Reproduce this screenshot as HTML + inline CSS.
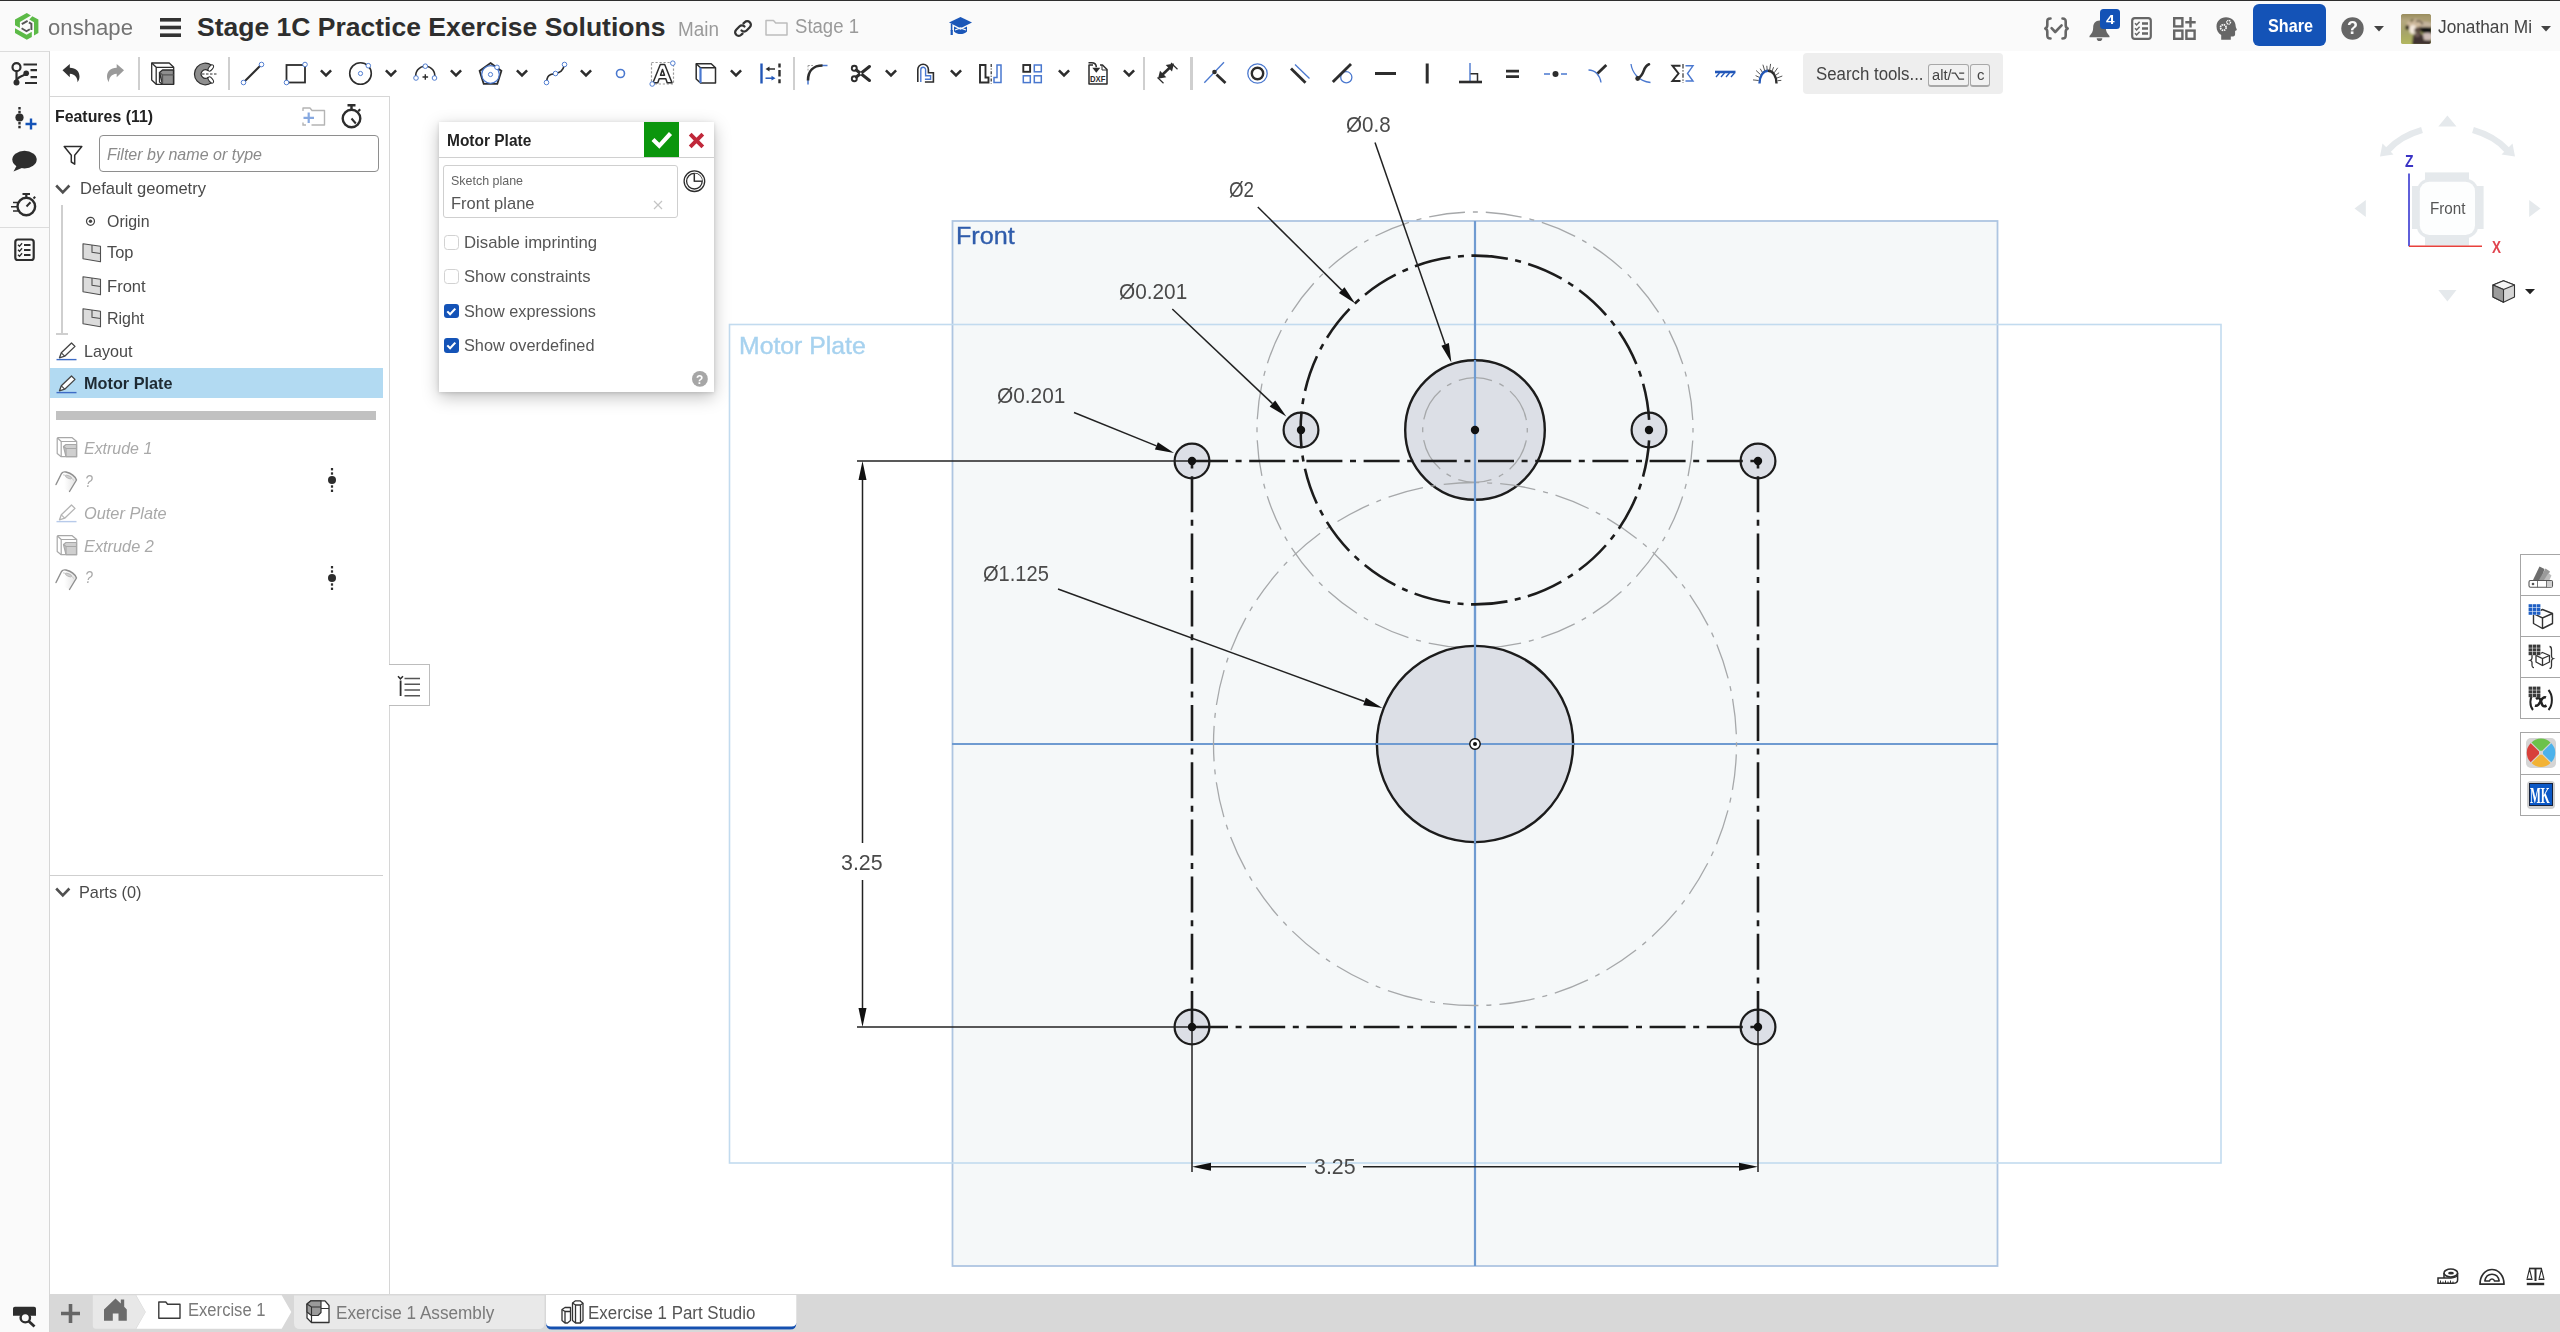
<!DOCTYPE html><html lang="en"><head><meta charset="utf-8"><title>Stage 1C Practice Exercise Solutions | Onshape</title><style>
*{box-sizing:border-box;margin:0;padding:0}
html,body{width:2560px;height:1332px;overflow:hidden;background:#fff}
body{font-family:"Liberation Sans",sans-serif;position:relative}
.abs{position:absolute}
.t{position:absolute;white-space:pre;line-height:1;transform-origin:0 50%;display:block}
svg{display:block;overflow:visible}
.ic{position:absolute;overflow:visible}
</style></head><body>
<svg class="abs" style="left:0;top:0" width="2560" height="1332" viewBox="0 0 2560 1332">
<rect x="952.5" y="221" width="1045" height="1045" fill="#f5f8f9" stroke="#aec5e1" stroke-width="1.800"/>
<rect x="729.5" y="324.5" width="1491.5" height="838.5" fill="none" stroke="#c2dbef" stroke-width="1.600"/>
<g stroke="#6f9bd1" stroke-width="2.2"><line x1="1475" y1="221" x2="1475" y2="1266"/><line x1="952" y1="744" x2="1998" y2="744"/></g>
<path d="M1693.00 430.00A218.00 218.00 0 1 1 1257.00 430.00A218.00 218.00 0 1 1 1693.00 430.00" fill="none" stroke="#a6a8aa" stroke-width="1.3" stroke-dasharray="36.07 8 5 8" stroke-dashoffset="46.57"/>
<circle cx="1475" cy="430" r="69.8" fill="#dcdfe6" stroke="#1c1c1c" stroke-width="2.400"/>
<circle cx="1475" cy="744" r="98.1" fill="#dcdfe6" stroke="#1c1c1c" stroke-width="2.400"/>
<path d="M1527.30 430.00A52.30 52.30 0 1 1 1422.70 430.00A52.30 52.30 0 1 1 1527.30 430.00" fill="none" stroke="#a6a8aa" stroke-width="1.3" stroke-dasharray="33.77 8 5 8" stroke-dashoffset="44.27"/>
<path d="M1736.50 744.00A261.50 261.50 0 1 1 1213.50 744.00A261.50 261.50 0 1 1 1736.50 744.00" fill="none" stroke="#a6a8aa" stroke-width="1.3" stroke-dasharray="35.66 8 5 8" stroke-dashoffset="46.16"/>
<circle cx="1301" cy="430" r="17.400" fill="#dcdfe6" stroke="#1c1c1c" stroke-width="2.200"/>
<circle cx="1649" cy="430" r="17.400" fill="#dcdfe6" stroke="#1c1c1c" stroke-width="2.200"/>
<circle cx="1192" cy="461" r="17.400" fill="#dcdfe6" stroke="#1c1c1c" stroke-width="2.200"/>
<circle cx="1758" cy="461" r="17.400" fill="#dcdfe6" stroke="#1c1c1c" stroke-width="2.200"/>
<circle cx="1192" cy="1027" r="17.400" fill="#dcdfe6" stroke="#1c1c1c" stroke-width="2.200"/>
<circle cx="1758" cy="1027" r="17.400" fill="#dcdfe6" stroke="#1c1c1c" stroke-width="2.200"/>
<g stroke="#6f9bd1" stroke-width="2.2"><line x1="1475" y1="360" x2="1475" y2="843"/><line x1="1376" y1="744" x2="1574" y2="744"/></g>
<g stroke="#1c1c1c" stroke-width="2.600" stroke-dasharray="36 7.6 6 7.6" fill="none">
<path d="M1192 461H1758"/><path d="M1192 1027H1758"/><path d="M1192 1027V461"/><path d="M1758 1027V461"/>
</g>
<path d="M1649.40 430.00A174.40 174.40 0 1 1 1300.60 430.00A174.40 174.40 0 1 1 1649.40 430.00" fill="none" stroke="#1c1c1c" stroke-width="2.6" stroke-dasharray="36.67 7.5 6 7.5" stroke-dashoffset="47.17"/>
<circle cx="1301" cy="430" r="4.2" fill="#111"/>
<circle cx="1649" cy="430" r="4.2" fill="#111"/>
<circle cx="1192" cy="461" r="4.2" fill="#111"/>
<circle cx="1758" cy="461" r="4.2" fill="#111"/>
<circle cx="1192" cy="1027" r="4.2" fill="#111"/>
<circle cx="1758" cy="1027" r="4.2" fill="#111"/>
<circle cx="1475" cy="430" r="4.2" fill="#111"/>
<circle cx="1475" cy="744" r="5.2" fill="#fff" stroke="#111" stroke-width="1.4"/><circle cx="1475" cy="744" r="2" fill="#111"/>
<line x1="1375.0" y1="142.6" x2="1445.2" y2="344.5" stroke="#222" stroke-width="1.5"/><polygon points="1451.4,362.4 1441.4,345.8 1448.9,343.1" fill="#111"/>
<line x1="1257.8" y1="207.0" x2="1341.7" y2="290.1" stroke="#222" stroke-width="1.5"/><polygon points="1355.2,303.5 1338.9,293.0 1344.5,287.3" fill="#111"/>
<line x1="1172.3" y1="309.0" x2="1272.5" y2="403.6" stroke="#222" stroke-width="1.5"/><polygon points="1286.3,416.6 1269.7,406.5 1275.2,400.6" fill="#111"/>
<line x1="1074.0" y1="412.5" x2="1156.4" y2="445.9" stroke="#222" stroke-width="1.5"/><polygon points="1174.0,453.0 1154.9,449.6 1157.9,442.2" fill="#111"/>
<line x1="1058.0" y1="589.0" x2="1364.6" y2="701.5" stroke="#222" stroke-width="1.5"/><polygon points="1382.4,708.0 1363.2,705.2 1365.9,697.7" fill="#111"/>
<g stroke="#222" stroke-width="1.5"><line x1="857" y1="461" x2="1188" y2="461"/><line x1="857" y1="1027" x2="1188" y2="1027"/></g>
<line x1="862.5" y1="843.0" x2="862.5" y2="480.0" stroke="#222" stroke-width="1.5"/><polygon points="862.5,461.0 866.5,480.0 858.5,480.0" fill="#111"/>
<line x1="862.5" y1="880.0" x2="862.5" y2="1008.0" stroke="#222" stroke-width="1.5"/><polygon points="862.5,1027.0 858.5,1008.0 866.5,1008.0" fill="#111"/>
<g stroke="#222" stroke-width="1.5"><line x1="1192" y1="1031" x2="1192" y2="1172"/><line x1="1758" y1="1031" x2="1758" y2="1172"/></g>
<line x1="1306.0" y1="1166.8" x2="1211.0" y2="1166.8" stroke="#222" stroke-width="1.5"/><polygon points="1192.0,1166.8 1211.0,1162.8 1211.0,1170.8" fill="#111"/>
<line x1="1363.0" y1="1166.8" x2="1739.0" y2="1166.8" stroke="#222" stroke-width="1.5"/><polygon points="1758.0,1166.8 1739.0,1170.8 1739.0,1162.8" fill="#111"/>
</svg>
<span class="t" style="left:955.5px;top:224px;font-size:24px;color:#2f5cab;transform:scaleX(1.0479);-webkit-text-stroke:0.350px #2f5cab;">Front</span>
<span class="t" style="left:739.0px;top:335px;font-size:23.5px;color:#a7d2ef;transform:scaleX(1.0544);-webkit-text-stroke:0.400px #a7d2ef;">Motor Plate</span>
<span class="t" style="left:1346.2px;top:114px;font-size:22px;color:#4a4a4a;transform:scaleX(0.9351);">Ø0.8</span>
<span class="t" style="left:1228.5px;top:179px;font-size:22px;color:#4a4a4a;transform:scaleX(0.8519);">Ø2</span>
<span class="t" style="left:1118.5px;top:281px;font-size:22px;color:#4a4a4a;transform:scaleX(0.9450);">Ø0.201</span>
<span class="t" style="left:997.0px;top:385px;font-size:22px;color:#4a4a4a;transform:scaleX(0.9478);">Ø0.201</span>
<span class="t" style="left:983.4px;top:563px;font-size:22px;color:#4a4a4a;transform:scaleX(0.9118);">Ø1.125</span>
<span class="t" style="left:841.4px;top:852px;font-size:22px;color:#4a4a4a;transform:scaleX(0.9715);">3.25</span>
<span class="t" style="left:1314.0px;top:1156px;font-size:22px;color:#4a4a4a;transform:scaleX(0.9715);">3.25</span>
<div class="abs" style="left:0;top:0;width:2560px;height:51px;background:#fafafa"></div>
<div class="abs" style="left:0;top:0;width:2560px;height:1px;background:#2e2e2e"></div>
<div class="abs" style="left:50px;top:51px;width:2510px;height:46px;background:#fff"></div>
<div class="abs" style="left:0;top:51px;width:50px;height:1281px;background:#fafafa;border-top:1px solid #dcdcdc;border-right:1px solid #d4d4d4"></div>
<div class="abs" style="left:0;top:227px;width:49px;height:1px;background:#dcdcdc"></div>
<div class="abs" style="left:49px;top:96px;width:341px;height:1199px;background:#fff;border:1px solid #d6d6d6"></div>
<div class="abs" style="left:50px;top:1294px;width:2510px;height:38px;background:#d8d8d8"></div>
<svg class="ic" style="left:10px;top:8px" width="40" height="38" viewBox="10 8 40 38"><g fill="#5cba47"><polygon points="26.800,13.100 30.900,15.500 19.900,21.900 19.900,28.100 15,25.300 15,19.400"/><polygon points="32.300,16.300 38.400,19.400 38.400,32.900 34,35.500 34,22.300 29.300,19.500"/><polygon points="15,28.200 26.600,34.800 31.800,31.800 31.800,36.900 26.800,39.800 15,32.900"/></g><g fill="none" stroke="#565656" stroke-width="1.900" stroke-linejoin="miter"><path d="M27.600 20.800L21.800 24.100"/><path d="M28.900 22.400L31.400 23.900V30"/><path d="M21.600 28.300L26.500 31.200L29.800 29.300"/></g></svg>
<span class="t" style="left:48.0px;top:17px;font-size:22.5px;color:#737373;transform:scaleX(0.9846);">onshape</span>
<svg class="ic" style="left:160px;top:18px" width="21" height="19" viewBox="0 0 21 19" ><rect x="0" y="0" width="21" height="3.6" fill="#333"/><rect x="0" y="7.7" width="21" height="3.6" fill="#333"/><rect x="0" y="15.4" width="21" height="3.6" fill="#333"/></svg>
<span class="t" style="left:197.0px;top:14px;font-size:26.5px;color:#2e2e2e;font-weight:bold;">Stage 1C Practice Exercise Solutions</span>
<span class="t" style="left:677.6px;top:20px;font-size:19.5px;color:#9a9a9a;transform:scaleX(0.9701);">Main</span>
<svg class="ic" style="left:733px;top:19px" width="20" height="19" viewBox="0 0 20 19" ><g fill="none" stroke="#333" stroke-width="2.3" stroke-linecap="round"><path d="M8.5 11.5a3.6 3.6 0 0 0 5.1 0l3.2-3.2a3.6 3.6 0 0 0-5.1-5.1l-1.2 1.2"/><path d="M11.5 7.5a3.6 3.6 0 0 0-5.1 0l-3.2 3.2a3.6 3.6 0 0 0 5.1 5.1l1.2-1.2"/></g></svg>
<svg class="ic" style="left:765px;top:19px" width="23" height="17" viewBox="0 0 23 17" ><path d="M1 1.5h7.5l2.2 2.6H22v12H1z" fill="none" stroke="#bdbdbd" stroke-width="1.5" stroke-linejoin="round"/></svg>
<span class="t" style="left:795.0px;top:17px;font-size:19.5px;color:#9a9a9a;transform:scaleX(0.9521);">Stage 1</span>
<svg class="ic" style="left:949px;top:17px" width="23" height="19" viewBox="0 0 23 19" ><polygon points="11.5,0 23,5.6 11.5,11.2 0,5.6" fill="#1a56b8"/><path d="M5 9.5v5c2 2 4.2 2.6 6.5 2.6s4.5-.6 6.5-2.6v-5l-6.5 3.2z" fill="#1a56b8"/><path d="M2.6 6.8v7.2" stroke="#1a56b8" stroke-width="1.6"/><rect x="1.6" y="13" width="2.2" height="5" fill="#1a56b8"/><path d="M6 13l5.5-2 5.5 2" stroke="#fafafa" stroke-width="1.2" fill="none"/></svg>
<svg class="ic" style="left:2044px;top:17px" width="25" height="23" viewBox="0 0 25 23" ><g fill="none" stroke="#666" stroke-width="2.6" stroke-linecap="round" stroke-linejoin="round"><path d="M6.5 1.5c-3 0-3.2 1.2-3.2 3.2v3.6c0 1.6-.6 2.6-2 3.2c1.4.6 2 1.6 2 3.2v3.6c0 2 .2 3.2 3.2 3.2"/><path d="M18.5 1.5c3 0 3.2 1.2 3.2 3.2v3.6c0 1.6.6 2.6 2 3.2c-1.4.6-2 1.6-2 3.2v3.6c0 2-.2 3.2-3.2 3.2"/><path d="M7.6 11.2l3.6 3.8l6.4-6.6"/></g></svg>
<svg class="ic" style="left:2089px;top:20px" width="21" height="20" viewBox="0 0 21 20" ><path d="M10.5 0.5c-4 0-6.3 3-6.3 6.8c0 4.2-1.3 6.2-3.7 8.6v1.3h20v-1.3c-2.4-2.4-3.7-4.4-3.7-8.6c0-3.8-2.300-6.800-6.300-6.800z" fill="#666"/><path d="M7.700 18.2a2.800 2.800 0 0 0 5.600 0z" fill="#666"/></svg>
<div class="abs" style="left:2100px;top:9px;width:20px;height:20px;background:#1352b6;border-radius:3.500px"></div>
<span class="t" style="left:2106.0px;top:13px;font-size:13.5px;color:#fff;font-weight:bold;transform:scaleX(1.1322);">4</span>
<svg class="ic" style="left:2131px;top:17px" width="21" height="23" viewBox="0 0 21 23" ><rect x="1.2" y="1.2" width="18.6" height="20.6" rx="2.6" fill="none" stroke="#666" stroke-width="2.2"/><g stroke="#666" stroke-width="2.400"><path d="M11 6.500h6M11 11.500h6M11 16.500h6"/></g><g fill="none" stroke="#666" stroke-width="1.500"><path d="M4 6.300l1.600 1.600l3-3.200M4 11.300l1.600 1.600l3-3.200M4 16.300l1.600 1.600l3-3.200"/></g></svg>
<svg class="ic" style="left:2173px;top:17px" width="23" height="23" viewBox="0 0 23 23" ><g fill="none" stroke="#666" stroke-width="2.400"><rect x="1.2" y="1.200" width="8.200" height="8.200"/><rect x="1.2" y="13.600" width="8.200" height="8.200"/><rect x="13.400" y="13.600" width="8.200" height="8.200"/><path d="M17.500 0v10.400M12.300 5.200h10.400"/></g></svg>
<svg class="ic" style="left:2216px;top:17px" width="21" height="23" viewBox="0 0 21 23" ><path d="M10 0.300c5.600 0 9.600 3.700 9.600 8.500c0 1.200.3 2 1 3.200c.4.700.2 1.200-.6 1.500l-.900.400v3.400c0 1.400-.800 2.100-2.100 2.100h-2.200v3.300H5.200v-4.600c-3-1.900-4.700-4.900-4.700-8.600c0-5.200 4-9.200 9.500-9.200z" fill="#666"/><circle cx="7.300" cy="10.500" r="2.800" fill="none" stroke="#fafafa" stroke-width="1.700" stroke-dasharray="1.500 0.700"/><circle cx="12.600" cy="5.300" r="1.900" fill="none" stroke="#fafafa" stroke-width="1.400" stroke-dasharray="1.100 0.600"/></svg>
<div class="abs" style="left:2253px;top:4px;width:73px;height:42px;background:#1453b7;border-radius:6px"></div>
<span class="t" style="left:2267.5px;top:17px;font-size:18.5px;color:#fff;font-weight:bold;transform:scaleX(0.8752);">Share</span>
<svg class="ic" style="left:2341px;top:17px" width="23" height="23" viewBox="0 0 23 23" ><circle cx="11.500" cy="11.500" r="11.200" fill="#666"/></svg>
<span class="t" style="left:2347.0px;top:18px;font-size:19px;color:#fafafa;font-weight:bold;transform:scaleX(0.9477);">?</span>
<svg class="ic" style="left:2374px;top:26px" width="10" height="6" viewBox="0 0 10 6" ><polygon points="0,0 10,0 5,5.500" fill="#444"/></svg>
<div class="abs" style="left:2401px;top:14px;width:30px;height:30px;border-radius:2.500px;overflow:hidden;background:#a59a66"><svg width="30" height="30" viewBox="0 0 30 30" style="display:block"><defs><filter id="avb" x="-20%" y="-20%" width="140%" height="140%"><feGaussianBlur stdDeviation="0.900"/></filter><linearGradient id="avg" x1="0" y1="0" x2="0" y2="1"><stop offset="0" stop-color="#8f8450"/><stop offset="0.250" stop-color="#b5a780"/><stop offset="0.600" stop-color="#a6a468"/><stop offset="1" stop-color="#b3b95c"/></linearGradient></defs><g filter="url(#avb)"><rect x="-2" y="-2" width="34" height="34" fill="url(#avg)"/><ellipse cx="23" cy="6" rx="9" ry="4" fill="#a79a6e"/><ellipse cx="15" cy="11" rx="9.500" ry="6" fill="#cdb89b"/><ellipse cx="25" cy="11" rx="6" ry="3.500" fill="#c3b29c"/><path d="M15 7.500c3-1.500 6 0 6.500 3" fill="none" stroke="#5d5040" stroke-width="1.600"/><ellipse cx="11" cy="6.500" rx="2.200" ry="1" fill="#6c6242" transform="rotate(-25 11 6.500)"/><ellipse cx="12" cy="15.500" rx="3.600" ry="4.500" fill="#f4e8dc"/><ellipse cx="6.300" cy="13.500" rx="2" ry="2.600" fill="#2b2415"/><path d="M14 14l6-1.500l2 2.500l-4 4l-5-1z" fill="#5a4a40"/><path d="M19 14.500c3-2 7-1.500 12-1v6c-4 1-8 0-11-1.500z" fill="#121212"/><ellipse cx="26.500" cy="22.500" rx="5.500" ry="3.800" fill="#cdbcb8"/><path d="M11 31l1-9.500l6-3.500l4 3l1 5l8 0.500v5z" fill="#3f3232"/><ellipse cx="16" cy="21" rx="3" ry="2" fill="#6d5a55"/></g></svg></div>
<span class="t" style="left:2438.0px;top:19px;font-size:17.5px;color:#444;transform:scaleX(0.9860);">Jonathan Mi</span>
<svg class="ic" style="left:2541px;top:26px" width="10" height="6" viewBox="0 0 10 6" ><polygon points="0,0 10,0 5,5.500" fill="#444"/></svg>
<svg class="abs" style="left:0;top:0" width="2560" height="100" viewBox="0 0 2560 100">
<path transform="translate(62.5,64)" d="M0 6.300L7.300 0V3.800C13.500 4 17 7.600 17 12.600C17 15 16.200 17 15 18.300C15.300 14.500 13 10.200 7.300 9.800V13.200Z" fill="#333"/>
<path transform="translate(124,64) scale(-1,1)" d="M0 6.300L7.300 0V3.800C13.500 4 17 7.600 17 12.600C17 15 16.200 17 15 18.300C15.300 14.500 13 10.200 7.300 9.800V13.200Z" fill="#9a9a9a"/>
<g transform="translate(151,62)" stroke="#2d2d2d" stroke-width="1.300" stroke-linejoin="round"><path d="M0.700 1h17.500l4.500 4.300v17H5.200L0.700 18z" fill="#fff"/><path d="M0.700 1l4.500 4.300h17.500M5.200 5.300v17" fill="none"/><path d="M8.500 10.500l3-2.500h11v14.300H11.500z" fill="#8e8e8e"/><path d="M8.500 10.500l3 2.300h11.200M11.500 12.800v9.500" fill="none" stroke="#555"/><path d="M8.500 10.500v9.500l3 2.300" fill="none"/></g>
<g transform="translate(195,63)"><path d="M16.500 2.200A10.800 10.800 0 1 0 16.500 19.800L13 14.500A4.300 4.300 0 1 1 13 7.500z" fill="#8e8e8e" stroke="#2d2d2d" stroke-width="1.200" stroke-linejoin="round"/><ellipse cx="15.800" cy="5" rx="3.600" ry="1.900" transform="rotate(-52 15.800 5)" fill="#fff" stroke="#2d2d2d" stroke-width="1"/><ellipse cx="15.800" cy="17" rx="3.600" ry="1.900" transform="rotate(52 15.800 17)" fill="#fff" stroke="#2d2d2d" stroke-width="1"/><path d="M7 11h15" stroke="#2d2d2d" stroke-width="1" stroke-dasharray="2.500 1.500"/></g>
<path d="M243.500 82.500L261.500 64.500" stroke="#2d2d2d" stroke-width="2"/><circle cx="243.5" cy="82.5" r="2.3" fill="#fff" stroke="#4a78cf" stroke-width="0.950"/><circle cx="261.5" cy="64.5" r="2.3" fill="#fff" stroke="#4a78cf" stroke-width="0.950"/>
<rect x="286.500" y="65" width="18.500" height="17.500" fill="none" stroke="#2d2d2d" stroke-width="1.800"/><circle cx="286.5" cy="82.5" r="2.3" fill="#fff" stroke="#4a78cf" stroke-width="0.950"/><circle cx="305" cy="64.5" r="2.3" fill="#fff" stroke="#4a78cf" stroke-width="0.950"/>
<circle cx="360.500" cy="73.500" r="10.800" fill="none" stroke="#2d2d2d" stroke-width="1.600"/><circle cx="360.5" cy="73.5" r="2.1" fill="#fff" stroke="#4a78cf" stroke-width="0.950"/><circle cx="368.3" cy="65.7" r="2.3" fill="#fff" stroke="#4a78cf" stroke-width="0.950"/>
<path d="M416 78A9.530 9.530 0 1 1 434.500 78" fill="none" stroke="#2d2d2d" stroke-width="1.600"/><circle cx="416" cy="78" r="2.3" fill="#fff" stroke="#4a78cf" stroke-width="0.950"/><circle cx="434.5" cy="78" r="2.3" fill="#fff" stroke="#4a78cf" stroke-width="0.950"/><circle cx="425.3" cy="66.2" r="2.3" fill="#fff" stroke="#4a78cf" stroke-width="0.950"/><path d="M422.500 77h5.600M425.300 74.200v5.600" stroke="#2d2d2d" stroke-width="1.400"/>
<polygon points="490.5,63.0 501.4,70.9 497.3,83.8 483.7,83.8 479.6,70.9" fill="none" stroke="#2d2d2d" stroke-width="1.800"/><circle cx="490.500" cy="74.500" r="8.800" fill="none" stroke="#4a78cf" stroke-width="1.200"/><circle cx="490.5" cy="74.5" r="2.1" fill="#fff" stroke="#4a78cf" stroke-width="0.950"/><circle cx="497" cy="67.3" r="2.3" fill="#fff" stroke="#4a78cf" stroke-width="0.950"/>
<path d="M546.500 82.500C547 74 551 74.500 555.500 73.500S563 71 564.500 64.500" fill="none" stroke="#2d2d2d" stroke-width="1.600"/><circle cx="546.5" cy="82.5" r="2.3" fill="#fff" stroke="#4a78cf" stroke-width="0.950"/><circle cx="555.5" cy="73.5" r="2.3" fill="#fff" stroke="#4a78cf" stroke-width="0.950"/><circle cx="564.5" cy="64.5" r="2.3" fill="#fff" stroke="#4a78cf" stroke-width="0.950"/>
<circle cx="620.500" cy="73.500" r="4" fill="none" stroke="#4a78cf" stroke-width="1.600"/>
<rect x="651.500" y="62.500" width="22" height="21.500" fill="none" stroke="#9a9a9a" stroke-width="1.200" stroke-dasharray="2.200 1.800"/>
<path d="M660.300 64.500H664.700L672 82.800H667.200L665.800 78.800H659.200L657.800 82.800H653Z M662.500 69.500L660.500 75.200H664.500Z" fill="#fff" fill-rule="evenodd" stroke="#2d2d2d" stroke-width="1.500" stroke-linejoin="round"/>
<circle cx="652.2" cy="84" r="2.3" fill="#fff" stroke="#4a78cf" stroke-width="0.950"/><circle cx="672.8" cy="63.2" r="2.3" fill="#fff" stroke="#4a78cf" stroke-width="0.950"/>
<g transform="translate(695.500,63)" fill="none" stroke="#2d2d2d" stroke-width="1.500" stroke-linejoin="round"><path d="M0.700 0.700h15l4.300 4v15.300H5L0.700 16z" fill="#fff"/><path d="M0.700 0.700L5 4.700h15"/><path d="M5 4.700v15.300" stroke="#4a78cf" stroke-width="2.200"/></g>
<path d="M761.500 63.500v20" stroke="#2257b8" stroke-width="2.400"/><path d="M779.500 63.500v20" stroke="#2d2d2d" stroke-width="2.400" stroke-dasharray="4 2.600 6.500 2.600"/><path d="M775 69h-7.500" stroke="#2d2d2d" stroke-width="1.500"/><polygon points="765.500,69 769.500,66.600 769.500,71.400" fill="#2d2d2d"/><path d="M765.500 78.200h7.500" stroke="#2257b8" stroke-width="1.500"/><polygon points="775.500,78.200 771.500,75.800 771.500,80.600" fill="#2257b8"/>
<path d="M808 65.500h6M808 65.500v6" stroke="#9a9a9a" stroke-width="1" stroke-dasharray="1.800 1.400" fill="none"/><path d="M808 84.500V80" stroke="#4a78cf" stroke-width="1.500"/><path d="M822 65.500H827.500" stroke="#4a78cf" stroke-width="1.500"/><path d="M808 80.500C808 71 813.500 65.500 822.500 65.500" fill="none" stroke="#2d2d2d" stroke-width="2.600"/>
<g transform="translate(851,65)" fill="none" stroke="#2d2d2d"><circle cx="3.300" cy="3.300" r="2.500" stroke-width="1.900"/><circle cx="3.300" cy="13.700" r="2.500" stroke-width="1.900"/><path d="M5.300 5L18.500 15.500" stroke-width="3" stroke-linecap="round"/><path d="M5.300 12L18.500 1.500" stroke-width="3" stroke-linecap="round"/><circle cx="9.800" cy="8.500" r="0.900" fill="#fff" stroke="none"/></g>
<path d="M917.800 82V69.500a5.300 5.300 0 0 1 10.600 0v3.300h5v9.200h-8.500" fill="none" stroke="#2d2d2d" stroke-width="1.600"/><path d="M920.800 82V69.700a2.400 2.400 0 0 1 4.800 0v6h5v3.500h-5.700" fill="none" stroke="#4a78cf" stroke-width="1.400"/>
<path d="M980 65h5.500v12.500h3v5H980z" fill="none" stroke="#2d2d2d" stroke-width="1.900"/><path d="M991.200 64v19.500" stroke="#2d2d2d" stroke-width="1.200" stroke-dasharray="3 1.600 1 1.600"/><path d="M1001 65h-4v12.500h-3v5h7z" fill="none" stroke="#4a78cf" stroke-width="1.500"/>
<rect x="1023.300" y="65" width="6.800" height="6.800" fill="none" stroke="#2d2d2d" stroke-width="1.900"/><g fill="none" stroke="#4a78cf" stroke-width="1.500"><rect x="1034.300" y="65" width="7" height="6.800"/><rect x="1023.300" y="75.800" width="7" height="6.800"/><rect x="1034.300" y="75.800" width="7" height="6.800"/></g>
<path d="M1093 65h-4v19h18V69.500L1102.500 65H1100" fill="none" stroke="#2d2d2d" stroke-width="1.500" stroke-linejoin="round"/><path d="M1102 65v5h5" fill="none" stroke="#2d2d2d" stroke-width="1"/><path d="M1088.500 62.800h3c3 0 4.800 1.500 4.800 4.500" fill="none" stroke="#2d2d2d" stroke-width="1.600"/><polygon points="1092.300,67.800 1100.300,67.800 1096.300,72.800" fill="#2d2d2d"/>
<text x="1090" y="82.300" font-family="Liberation Sans, sans-serif" font-size="8.200" font-weight="bold" fill="#2d2d2d" textLength="15.500" lengthAdjust="spacingAndGlyphs">DXF</text>
<path d="M1161.500 75.500L1170.500 67" stroke="#2d2d2d" stroke-width="2.600"/><polygon points="1158,78.800 1160,70.800 1166.300,77.300" fill="#2d2d2d"/><polygon points="1174,63.600 1172,71.600 1165.700,65.100" fill="#2d2d2d"/><path d="M1157.500 77.500l6 5.800M1171 63l6.500 6.300" stroke="#2d2d2d" stroke-width="1.200"/>
<path d="M1204.300 82.800L1224 62.300" stroke="#4a78cf" stroke-width="1.300"/><path d="M1216.500 74.500L1225.500 83" stroke="#2d2d2d" stroke-width="2.800"/><circle cx="1214.500" cy="72" r="2.300" fill="#2d2d2d"/>
<circle cx="1257.500" cy="73.500" r="9.700" fill="none" stroke="#4a78cf" stroke-width="1.300"/><circle cx="1257.500" cy="73.500" r="5.700" fill="none" stroke="#2d2d2d" stroke-width="2.400"/>
<path d="M1291 68.500L1305.500 82.800" stroke="#2d2d2d" stroke-width="2.800"/><path d="M1295 64.500L1309.500 78.500" stroke="#4a78cf" stroke-width="1.300"/>
<circle cx="1346.300" cy="77.300" r="5.600" fill="none" stroke="#4a78cf" stroke-width="1.300"/><path d="M1332.800 82L1351 64" stroke="#2d2d2d" stroke-width="2.800"/>
<path d="M1375 73.500h21" stroke="#2d2d2d" stroke-width="3"/><path d="M1427.200 63.500v20" stroke="#2d2d2d" stroke-width="3"/>
<path d="M1470 63v18" stroke="#4a78cf" stroke-width="1.400"/><path d="M1470.500 73.800h7v7.500" fill="none" stroke="#2d2d2d" stroke-width="1.500"/><path d="M1459 82h23" stroke="#2d2d2d" stroke-width="2.600"/>
<path d="M1506 71.200h13M1506 76.700h13" stroke="#2d2d2d" stroke-width="2.700"/>
<path d="M1544 74h6M1561 74h6" stroke="#4a78cf" stroke-width="1.500"/><circle cx="1555.500" cy="74" r="3" fill="#2d2d2d"/>
<path d="M1588.500 70C1595 70 1600 75 1601 82.500" fill="none" stroke="#4a78cf" stroke-width="1.300"/><path d="M1597.500 73.500L1606.300 65" stroke="#2d2d2d" stroke-width="2.800"/>
<path d="M1631 64C1632 72 1638 81 1650.500 82.500" fill="none" stroke="#4a78cf" stroke-width="1.300"/><path d="M1638 78.300C1645 75 1642.500 66.500 1649 64.300" fill="none" stroke="#2d2d2d" stroke-width="2.600" stroke-linecap="round"/><circle cx="1637.700" cy="78.500" r="2.400" fill="#2d2d2d"/>
<path d="M1680.500 65.800H1672.500L1678.500 73.500L1672.500 81H1680.500" fill="none" stroke="#2d2d2d" stroke-width="2"/><path d="M1683 64v19" stroke="#2d2d2d" stroke-width="1.200" stroke-dasharray="4.500 1.800 1.200 1.800"/><path d="M1685.500 65.800H1693L1687.500 73.500L1693 81H1685.500" fill="none" stroke="#4a78cf" stroke-width="1.400"/>
<path d="M1715 72h20.500" stroke="#2257b8" stroke-width="2.600"/><path d="M1716 77l3.500-4M1721 77l3.500-4M1726 77l3.500-4M1731 77l3.500-4" stroke="#2257b8" stroke-width="1.300"/>
<path d="M1759.500 83.500C1759.500 76 1763 70.800 1768 70.800" fill="none" stroke="#2257b8" stroke-width="2.400"/><path d="M1768 70.800C1773 70.800 1776.500 76 1776.500 83.500" fill="none" stroke="#2d2d2d" stroke-width="2.400"/>
<path d="M1758.6 80.5L1753.0 79.9M1759.2 77.3L1755.6 75.6M1760.5 74.6L1756.1 70.5M1762.4 72.4L1760.2 68.7M1764.8 71.0L1762.9 64.7M1767.2 70.3L1766.8 65.8M1769.6 70.5L1770.6 63.9M1772.0 71.3L1773.6 67.2M1774.1 72.9L1777.7 67.8M1775.8 75.2L1779.1 72.7M1777.0 78.0L1782.3 76.0M1777.4 80.7L1781.3 80.4" stroke="#555" stroke-width="1"/>
</svg>
<svg class="ic" style="left:320px;top:69px" width="12" height="9" viewBox="0 0 12 9" ><path d="M0.9 1.400L6 6.500L11.100 1.400" fill="none" stroke="#2d2d2d" stroke-width="2.500"/></svg>
<svg class="ic" style="left:385px;top:69px" width="12" height="9" viewBox="0 0 12 9" ><path d="M0.9 1.400L6 6.500L11.100 1.400" fill="none" stroke="#2d2d2d" stroke-width="2.500"/></svg>
<svg class="ic" style="left:450px;top:69px" width="12" height="9" viewBox="0 0 12 9" ><path d="M0.9 1.400L6 6.500L11.100 1.400" fill="none" stroke="#2d2d2d" stroke-width="2.500"/></svg>
<svg class="ic" style="left:515.5px;top:69px" width="12" height="9" viewBox="0 0 12 9" ><path d="M0.9 1.400L6 6.500L11.100 1.400" fill="none" stroke="#2d2d2d" stroke-width="2.500"/></svg>
<svg class="ic" style="left:580px;top:69px" width="12" height="9" viewBox="0 0 12 9" ><path d="M0.9 1.400L6 6.500L11.100 1.400" fill="none" stroke="#2d2d2d" stroke-width="2.500"/></svg>
<svg class="ic" style="left:730px;top:69px" width="12" height="9" viewBox="0 0 12 9" ><path d="M0.9 1.400L6 6.500L11.100 1.400" fill="none" stroke="#2d2d2d" stroke-width="2.500"/></svg>
<svg class="ic" style="left:885px;top:69px" width="12" height="9" viewBox="0 0 12 9" ><path d="M0.9 1.400L6 6.500L11.100 1.400" fill="none" stroke="#2d2d2d" stroke-width="2.500"/></svg>
<svg class="ic" style="left:950px;top:69px" width="12" height="9" viewBox="0 0 12 9" ><path d="M0.9 1.400L6 6.500L11.100 1.400" fill="none" stroke="#2d2d2d" stroke-width="2.500"/></svg>
<svg class="ic" style="left:1058px;top:69px" width="12" height="9" viewBox="0 0 12 9" ><path d="M0.9 1.400L6 6.500L11.100 1.400" fill="none" stroke="#2d2d2d" stroke-width="2.500"/></svg>
<svg class="ic" style="left:1123px;top:69px" width="12" height="9" viewBox="0 0 12 9" ><path d="M0.9 1.400L6 6.500L11.100 1.400" fill="none" stroke="#2d2d2d" stroke-width="2.500"/></svg>
<div class="abs" style="left:138.0px;top:57px;width:2px;height:33px;background:#cfcfcf"></div>
<div class="abs" style="left:228.0px;top:57px;width:2px;height:33px;background:#cfcfcf"></div>
<div class="abs" style="left:793.0px;top:57px;width:2px;height:33px;background:#cfcfcf"></div>
<div class="abs" style="left:1143.0px;top:57px;width:2px;height:33px;background:#cfcfcf"></div>
<div class="abs" style="left:1190.0px;top:57px;width:3px;height:33px;background:#cfcfcf"></div>
<div class="abs" style="left:1803px;top:53px;width:200px;height:40.500px;background:#eeeeee;border-radius:4px"></div>
<span class="t" style="left:1815.5px;top:66px;font-size:17.5px;color:#444;transform:scaleX(0.9610);">Search tools...</span>
<div class="abs" style="left:1928px;top:64px;width:40.500px;height:22.500px;background:#f1f1f1;border:1px solid #a8a8a8;border-bottom-width:2px;border-radius:3px"></div>
<div class="abs" style="left:1969.500px;top:64px;width:20.500px;height:22.500px;background:#f1f1f1;border:1px solid #a8a8a8;border-bottom-width:2px;border-radius:3px"></div>
<span class="t" style="left:1931.5px;top:67px;font-size:15.5px;color:#444;transform:scaleX(0.9431);">alt/</span>
<svg class="ic" style="left:1951px;top:71px" width="14" height="10" viewBox="0 0 14 10"><path d="M0.500 2.200h3.800l3.800 6h5M8.200 2.200h5" fill="none" stroke="#444" stroke-width="1.300"/></svg>
<span class="t" style="left:1976.5px;top:67px;font-size:15.5px;color:#444;transform:scaleX(0.9677);">c</span>
<svg class="ic" style="left:0px;top:52px" width="50" height="220" viewBox="0 0 50 220" ><g fill="none" stroke="#2d2d2d" stroke-width="2.200"><circle cx="16.500" cy="15.200" r="4"/><path d="M16.500 19.200V28"/><path d="M16.500 29.500C16.500 24.500 22 25 25.500 22"/><path d="M23.500 12.500H37M30.500 18.200H37M30.500 25.100H37M25 31H37"/></g><circle cx="16.500" cy="30.500" r="3" fill="#2d2d2d"/><circle cx="26.200" cy="21.300" r="2.800" fill="#2d2d2d"/><g fill="#2d2d2d"><rect x="18.300" y="55" width="2.400" height="2.500"/><rect x="18.300" y="58.800" width="2.400" height="2.500"/><rect x="18.300" y="70" width="2.400" height="2.500"/><rect x="18.300" y="73.800" width="2.400" height="2.500"/></g><circle cx="19.500" cy="65.500" r="4.100" fill="#2d2d2d"/><path d="M25.500 72H36.500M31 66.500V77.500" stroke="#1453b7" stroke-width="2.400"/><ellipse cx="24.500" cy="107.600" rx="12.200" ry="8.800" fill="#2d2d2d"/><path d="M17 113L13.500 119.500L23 115.500Z" fill="#2d2d2d"/><g fill="none" stroke="#2d2d2d"><circle cx="26.300" cy="154.500" r="8.800" stroke-width="2.400"/><path d="M26.300 145.500V142.500M22.500 142H30" stroke-width="2.200"/><path d="M33.500 146.500l1.700-1.700" stroke-width="2"/><path d="M26.500 154.500l4-4.200" stroke-width="2"/><path d="M13 150.500H19M11 154.800H17M13 159H19" stroke-width="1.600"/></g><rect x="15.300" y="187.500" width="18.400" height="20.500" rx="2.600" fill="none" stroke="#2d2d2d" stroke-width="2.200"/><path d="M24 193h6.500M24 198h6.500M24 203h6.500" stroke="#2d2d2d" stroke-width="2.200"/><path d="M18 192.800l1.500 1.500l2.600-3M18 197.800l1.500 1.500l2.600-3M18 202.800l1.500 1.500l2.600-3" fill="none" stroke="#2d2d2d" stroke-width="1.300"/></svg>
<svg class="ic" style="left:13px;top:1306px" width="24" height="21" viewBox="0 0 24 21" ><path d="M2 0.800h19c1.200 0 2 .8 2 2v7h-5.500a6 6 0 0 0-10.500 0H0V2.800c0-1.200.800-2 2-2z" fill="#2d2d2d"/><circle cx="12.300" cy="11.700" r="4.700" fill="none" stroke="#2d2d2d" stroke-width="2.400"/><path d="M15.800 15.300L21.500 20.500" stroke="#2d2d2d" stroke-width="2.800"/></svg>
<span class="t" style="left:55.0px;top:108px;font-size:17px;color:#222;font-weight:bold;transform:scaleX(0.9344);">Features (11)</span>
<svg class="ic" style="left:302px;top:107px" width="24" height="19" viewBox="0 0 24 19" ><path d="M1 4V1h7l2 2.500h12.500v14.500H9.500" fill="none" stroke="#b4b4b4" stroke-width="1.400" stroke-linejoin="round"/><path d="M1 15.500v2.500h3" fill="none" stroke="#b4b4b4" stroke-width="1.400"/><path d="M1.500 10.800H12M6.700 5.500V16" stroke="#86a8e0" stroke-width="2.200"/></svg>
<svg class="ic" style="left:340px;top:103px" width="23" height="26" viewBox="0 0 23 26" ><circle cx="11.500" cy="15.500" r="8.800" fill="none" stroke="#2d2d2d" stroke-width="2.400"/><path d="M11.500 6.500V3M7.500 2.200H15.500" stroke="#2d2d2d" stroke-width="2.400" fill="none"/><path d="M18.200 8.300l2-2" stroke="#2d2d2d" stroke-width="2.200"/><path d="M11.500 15.500l4.300 5" stroke="#2d2d2d" stroke-width="2"/></svg>
<svg class="ic" style="left:63px;top:145px" width="20" height="21" viewBox="0 0 20 21" ><path d="M1.200 1.500H18.800L11.700 10.200V19.200L8.300 17V10.200Z" fill="none" stroke="#2d2d2d" stroke-width="1.500" stroke-linejoin="round"/></svg>
<div class="abs" style="left:99px;top:135px;width:280px;height:36.500px;border:1px solid #8e8e8e;border-radius:4px;background:#fff"></div>
<span class="t" style="left:107.0px;top:146px;font-size:17px;color:#8a8a8a;font-style:italic;transform:scaleX(0.9428);">Filter by name or type</span>
<svg class="ic" style="left:55px;top:184px" width="16" height="11" viewBox="0 0 16 11" ><path d="M1.200 1.500L7.800 8.300L14.400 1.500" fill="none" stroke="#505050" stroke-width="2.600"/></svg>
<span class="t" style="left:80.0px;top:180px;font-size:17px;color:#4a4a4a;transform:scaleX(0.9733);">Default geometry</span>
<div class="abs" style="left:61.300px;top:205px;width:1.500px;height:129px;background:#cfcfcf"></div><div class="abs" style="left:56px;top:333.300px;width:12px;height:1.500px;background:#cfcfcf"></div>
<svg class="ic" style="left:85px;top:216px" width="11" height="11" viewBox="0 0 11 11" ><circle cx="5.500" cy="5.300" r="4" fill="none" stroke="#444" stroke-width="1.200"/><circle cx="5.500" cy="5.300" r="1.700" fill="#444"/></svg>
<span class="t" style="left:107.0px;top:213px;font-size:17px;color:#4a4a4a;transform:scaleX(0.9372);">Origin</span>
<svg class="ic" style="left:81.5px;top:243px" width="20" height="20" viewBox="0 0 20 20" ><path d="M1 0.700L18.500 3.200V18.700L1 15.700Z" fill="#dcdcdc" stroke="#505050" stroke-width="1.100" stroke-linejoin="round"/><path d="M10 2.100V9.200L18.500 10.500" fill="none" stroke="#505050" stroke-width="1.100"/></svg>
<span class="t" style="left:107.0px;top:244px;font-size:17px;color:#4a4a4a;transform:scaleX(0.9668);">Top</span>
<svg class="ic" style="left:81.5px;top:275.5px" width="20" height="20" viewBox="0 0 20 20" ><path d="M1 0.700L18.500 3.200V18.700L1 15.700Z" fill="#dcdcdc" stroke="#505050" stroke-width="1.100" stroke-linejoin="round"/><path d="M10 2.100V9.200L18.500 10.500" fill="none" stroke="#505050" stroke-width="1.100"/></svg>
<span class="t" style="left:107.0px;top:278px;font-size:17px;color:#4a4a4a;transform:scaleX(0.9753);">Front</span>
<svg class="ic" style="left:81.5px;top:307.5px" width="20" height="20" viewBox="0 0 20 20" ><path d="M1 0.700L18.500 3.200V18.700L1 15.700Z" fill="#dcdcdc" stroke="#505050" stroke-width="1.100" stroke-linejoin="round"/><path d="M10 2.100V9.200L18.500 10.500" fill="none" stroke="#505050" stroke-width="1.100"/></svg>
<span class="t" style="left:107.0px;top:310px;font-size:17px;color:#4a4a4a;transform:scaleX(0.9398);">Right</span>
<svg class="ic" style="left:56px;top:342px" width="22" height="20" viewBox="0 0 22 20" ><g opacity="1"><path d="M3.500 15.800L5.300 10.800L15.500 1L19 4.400L8.700 14.200Z" fill="#fff" stroke="#444" stroke-width="1.300" stroke-linejoin="round"/><path d="M5.300 10.800L8.700 14.200" stroke="#444" stroke-width="1.100"/><path d="M0.500 17.600H20.500" stroke="#3d6cc6" stroke-width="1.400"/></g></svg>
<span class="t" style="left:83.5px;top:343px;font-size:17px;color:#4a4a4a;transform:scaleX(0.9502);">Layout</span>
<div class="abs" style="left:50px;top:368px;width:333px;height:30px;background:#b2daf2"></div>
<svg class="ic" style="left:56px;top:374.5px" width="22" height="20" viewBox="0 0 22 20" ><g opacity="1"><path d="M3.500 15.800L5.300 10.800L15.500 1L19 4.400L8.700 14.200Z" fill="#fff" stroke="#444" stroke-width="1.300" stroke-linejoin="round"/><path d="M5.300 10.800L8.700 14.200" stroke="#444" stroke-width="1.100"/><path d="M0.500 17.600H20.500" stroke="#3d6cc6" stroke-width="1.400"/></g></svg>
<span class="t" style="left:83.5px;top:375px;font-size:17px;color:#1e2a33;font-weight:bold;transform:scaleX(0.9561);">Motor Plate</span>
<div class="abs" style="left:56px;top:411px;width:320px;height:8.700px;background:#c1c1c1"></div>
<svg class="ic" style="left:56px;top:437px" width="22" height="21" viewBox="0 0 22 21" ><g stroke="#a8a8a8" stroke-width="1.200" stroke-linejoin="round"><path d="M1.200 1.700c0-.6.400-1 1-1h14l4.500 3.800v15.200H5.200L1.200 16.500z" fill="#fff"/><path d="M5.200 4.500h15.500M5.200 4.500v15.200M1.500 1l3.700 3.500" fill="none"/><path d="M7.500 9.500l2.500-2h10.500v12.200H10z" fill="#cfcfcf"/><path d="M7.500 9.500l2.500 2h10.500M10 11.500v8" fill="none"/></g></svg>
<span class="t" style="left:84.2px;top:440px;font-size:17px;color:#a9a9a9;font-style:italic;transform:scaleX(0.9386);">Extrude 1</span>
<svg class="ic" style="left:55px;top:469.8px" width="24" height="23" viewBox="0 0 24 23" ><defs><linearGradient id="cg469" x1="0" y1="0" x2="1" y2="0"><stop offset="0.400" stop-color="#fff"/><stop offset="1" stop-color="#e2e2e2"/></linearGradient></defs><path d="M1 14.500L6.500 3.500Q8 1.300 11 2C15 3 20 6 21.500 10L14.500 21.500" fill="url(#cg469)" stroke="none"/><path d="M1 14.500L6.500 3.500Q8 1.300 11 2C15 3 20 6 21.500 10L14.500 21.500" fill="none" stroke="#8f8f8f" stroke-width="1.400" stroke-linecap="round" stroke-linejoin="round"/><path d="M8 4.800C12 5.300 16.500 7.500 19 10.500" fill="none" stroke="#c4c4c4" stroke-width="0.900"/><ellipse cx="13.500" cy="7" rx="3.300" ry="1.300" transform="rotate(24 13.500 7)" fill="#d0d0d0" stroke="#b0b0b0" stroke-width="0.700"/></svg>
<span class="t" style="left:85.0px;top:473px;font-size:17px;color:#a9a9a9;font-style:italic;transform:scaleX(0.8250);">?</span>
<svg class="ic" style="left:327px;top:467.5px" width="10" height="24" viewBox="0 0 10 24" ><g fill="#2d2d2d"><rect x="3.900" y="0" width="2.200" height="2.400"/><rect x="3.900" y="4.300" width="2.200" height="2.400"/><circle cx="5" cy="12" r="4"/><rect x="3.900" y="17.300" width="2.200" height="2.400"/><rect x="3.900" y="21.600" width="2.200" height="2.400"/></g></svg>
<svg class="ic" style="left:56px;top:504px" width="22" height="20" viewBox="0 0 22 20" ><g opacity="0.55"><path d="M3.500 15.800L5.300 10.800L15.500 1L19 4.400L8.700 14.200Z" fill="#fff" stroke="#777" stroke-width="1.300" stroke-linejoin="round"/><path d="M5.300 10.800L8.700 14.200" stroke="#777" stroke-width="1.100"/><path d="M0.500 17.600H20.500" stroke="#7d9fd9" stroke-width="1.400"/></g></svg>
<span class="t" style="left:84.2px;top:505px;font-size:17px;color:#a9a9a9;font-style:italic;transform:scaleX(0.9606);">Outer Plate</span>
<svg class="ic" style="left:56px;top:535px" width="22" height="21" viewBox="0 0 22 21" ><g stroke="#a8a8a8" stroke-width="1.200" stroke-linejoin="round"><path d="M1.200 1.700c0-.6.400-1 1-1h14l4.500 3.800v15.200H5.200L1.200 16.500z" fill="#fff"/><path d="M5.200 4.500h15.500M5.200 4.500v15.200M1.500 1l3.700 3.500" fill="none"/><path d="M7.500 9.500l2.500-2h10.500v12.200H10z" fill="#cfcfcf"/><path d="M7.500 9.500l2.500 2h10.500M10 11.500v8" fill="none"/></g></svg>
<span class="t" style="left:84.2px;top:538px;font-size:17px;color:#a9a9a9;font-style:italic;transform:scaleX(0.9592);">Extrude 2</span>
<svg class="ic" style="left:55px;top:567.5px" width="24" height="23" viewBox="0 0 24 23" ><defs><linearGradient id="cg567" x1="0" y1="0" x2="1" y2="0"><stop offset="0.400" stop-color="#fff"/><stop offset="1" stop-color="#e2e2e2"/></linearGradient></defs><path d="M1 14.500L6.500 3.500Q8 1.300 11 2C15 3 20 6 21.500 10L14.500 21.500" fill="url(#cg567)" stroke="none"/><path d="M1 14.500L6.500 3.500Q8 1.300 11 2C15 3 20 6 21.500 10L14.500 21.500" fill="none" stroke="#8f8f8f" stroke-width="1.400" stroke-linecap="round" stroke-linejoin="round"/><path d="M8 4.800C12 5.300 16.500 7.500 19 10.500" fill="none" stroke="#c4c4c4" stroke-width="0.900"/><ellipse cx="13.500" cy="7" rx="3.300" ry="1.300" transform="rotate(24 13.500 7)" fill="#d0d0d0" stroke="#b0b0b0" stroke-width="0.700"/></svg>
<span class="t" style="left:85.0px;top:569px;font-size:17px;color:#a9a9a9;font-style:italic;transform:scaleX(0.8250);">?</span>
<svg class="ic" style="left:327px;top:565.5px" width="10" height="24" viewBox="0 0 10 24" ><g fill="#2d2d2d"><rect x="3.900" y="0" width="2.200" height="2.400"/><rect x="3.900" y="4.300" width="2.200" height="2.400"/><circle cx="5" cy="12" r="4"/><rect x="3.900" y="17.300" width="2.200" height="2.400"/><rect x="3.900" y="21.600" width="2.200" height="2.400"/></g></svg>
<div class="abs" style="left:50px;top:875px;width:333px;height:1px;background:#cfcfcf"></div>
<svg class="ic" style="left:55px;top:887px" width="16" height="11" viewBox="0 0 16 11" ><path d="M1.200 1.500L7.800 8.300L14.400 1.500" fill="none" stroke="#505050" stroke-width="2.600"/></svg>
<span class="t" style="left:79.0px;top:884px;font-size:17px;color:#4a4a4a;transform:scaleX(0.9589);">Parts (0)</span>
<div class="abs" style="left:389px;top:664px;width:41px;height:42px;background:#fff;border:1px solid #bdbdbd;border-left:none"></div>
<svg class="ic" style="left:397px;top:675px" width="24" height="22" viewBox="0 0 24 22" ><path d="M1 1.200l2.400 2.600l2.600-2.600" fill="none" stroke="#2d2d2d" stroke-width="1.500"/><path d="M3.600 5.500V21" stroke="#2d2d2d" stroke-width="1.800"/><path d="M7.500 3.500H23M7.500 9.300H23M7.500 15.100H23M7.500 20.800H23" stroke="#555" stroke-width="1.500"/></svg>
<div class="abs" style="left:439px;top:122px;width:275px;height:269.500px;background:#fff;box-shadow:0 5px 16px rgba(0,0,0,0.250),0 1px 4px rgba(0,0,0,0.130)"></div>
<div class="abs" style="left:439px;top:157px;width:275px;height:1px;background:#d0d0d0"></div>
<span class="t" style="left:447.0px;top:133px;font-size:15.8px;color:#222;font-weight:bold;transform:scaleX(0.9795);">Motor Plate</span>
<div class="abs" style="left:644px;top:122px;width:35px;height:35px;background:#0b960d"></div>
<svg class="ic" style="left:644px;top:122px" width="35" height="35" viewBox="0 0 35 35" ><path d="M9 17.500l6.300 6.300L26.500 11.500" fill="none" stroke="#fff" stroke-width="4.200"/></svg>
<svg class="ic" style="left:688px;top:132px" width="17" height="17" viewBox="0 0 17 17" ><path d="M2.200 2.200L14.800 14.800M14.800 2.200L2.200 14.800" stroke="#c0283a" stroke-width="3.900"/></svg>
<div class="abs" style="left:443.400px;top:165.400px;width:234.400px;height:53px;background:#fff;border:1px solid #cfcfcf;border-radius:3px"></div>
<span class="t" style="left:450.8px;top:174px;font-size:13px;color:#636363;transform:scaleX(0.9579);">Sketch plane</span>
<span class="t" style="left:451.3px;top:195px;font-size:17px;color:#555;transform:scaleX(0.9709);">Front plane</span>
<svg class="ic" style="left:652.5px;top:199.5px" width="10" height="10" viewBox="0 0 10 10" ><path d="M1 1L9 9M9 1L1 9" stroke="#c4c4c4" stroke-width="1.200"/></svg>
<svg class="ic" style="left:683px;top:169.5px" width="23" height="23" viewBox="0 0 23 23" ><circle cx="11.400" cy="11.200" r="10.300" fill="none" stroke="#2d2d2d" stroke-width="1.300"/><circle cx="11.400" cy="11.200" r="7.800" fill="none" stroke="#2d2d2d" stroke-width="1.300"/><path d="M11.400 3.400V11.200H19.200" fill="none" stroke="#2d2d2d" stroke-width="1.300"/><path d="M11.400 11.200H19.200A7.800 7.800 0 0 0 11.400 3.400z" fill="#fff" stroke="none"/><path d="M11.400 3.400V11.200H19.200" fill="none" stroke="#2d2d2d" stroke-width="1.300"/></svg>
<div class="abs" style="left:444.300px;top:235.3px;width:14.400px;height:14.400px;background:#fff;border:1px solid #d2d2d2;border-radius:3.500px"></div>
<span class="t" style="left:464.0px;top:234px;font-size:17px;color:#565656;transform:scaleX(0.9843);">Disable imprinting</span>
<div class="abs" style="left:444.300px;top:269.3px;width:14.400px;height:14.400px;background:#fff;border:1px solid #d2d2d2;border-radius:3.500px"></div>
<span class="t" style="left:464.0px;top:268px;font-size:17px;color:#565656;transform:scaleX(0.9772);">Show constraints</span>
<div class="abs" style="left:444.300px;top:303.6px;width:14.400px;height:14.400px;background:#1453b7;border-radius:3px"></div><svg class="ic" style="left:444.3px;top:303.6px" width="14.4" height="14.4" viewBox="0 0 14.4 14.4" ><path d="M3.300 7.400l2.800 2.900l5.200-5.700" fill="none" stroke="#fff" stroke-width="2.100"/></svg>
<span class="t" style="left:464.0px;top:303px;font-size:17px;color:#565656;transform:scaleX(0.9568);">Show expressions</span>
<div class="abs" style="left:444.300px;top:338.2px;width:14.400px;height:14.400px;background:#1453b7;border-radius:3px"></div><svg class="ic" style="left:444.3px;top:338.2px" width="14.4" height="14.4" viewBox="0 0 14.4 14.4" ><path d="M3.300 7.400l2.800 2.900l5.200-5.700" fill="none" stroke="#fff" stroke-width="2.100"/></svg>
<span class="t" style="left:464.0px;top:337px;font-size:17px;color:#565656;transform:scaleX(0.9589);">Show overdefined</span>
<svg class="ic" style="left:691px;top:370px" width="18" height="18" viewBox="0 0 18 18" ><circle cx="8.900" cy="8.900" r="7.900" fill="#a6a6a6"/></svg>
<span class="t" style="left:696.2px;top:373px;font-size:13px;color:#fff;font-weight:bold;transform:scaleX(0.9192);">?</span>
<svg class="abs" style="left:2340px;top:100px" width="220" height="220" viewBox="2340 100 220 220">
<polygon points="2447.400,115.500 2456.500,126.500 2438.300,126.500" fill="#e5e9ec"/>
<polygon points="2447.400,301.500 2456.500,290 2438.300,290" fill="#e5e9ec"/>
<polygon points="2354.500,208.500 2365.800,200 2365.800,217" fill="#e5e9ec"/>
<polygon points="2540.500,208.500 2529.200,200 2529.200,217" fill="#e5e9ec"/>
<path d="M2422 130C2408 134 2396 141 2388 150" fill="none" stroke="#e5e9ec" stroke-width="6.500"/><polygon points="2380,156.500 2382.500,143.500 2393.500,154.500" fill="#e5e9ec"/>
<path d="M2473 130C2487 134 2499 141 2507 150" fill="none" stroke="#e5e9ec" stroke-width="6.500"/><polygon points="2515,156.500 2512.500,143.500 2501.500,154.500" fill="#e5e9ec"/>
<g fill="#e5e9ec"><rect x="2425" y="172.400" width="44" height="12"/><rect x="2425" y="233" width="44" height="12.600"/><rect x="2412" y="186" width="10" height="43"/><rect x="2473" y="186" width="10.600" height="43"/><rect x="2416.800" y="178.800" width="61.400" height="59.400" rx="12.500"/></g>
<rect x="2419.800" y="181.800" width="55.200" height="53.200" rx="9.500" fill="#fdfefe"/>
<path d="M2409 173.500V246.300" stroke="#2a2acd" stroke-width="1.500"/><path d="M2409 246.300H2482" stroke="#e8413c" stroke-width="1.500"/>
</svg>
<span class="t" style="left:2404.5px;top:153px;font-size:17px;color:#3a33c4;font-weight:bold;transform:scaleX(0.8185);">Z</span>
<span class="t" style="left:2491.5px;top:239px;font-size:17px;color:#e0454f;font-weight:bold;transform:scaleX(0.7937);">X</span>
<span class="t" style="left:2429.5px;top:201px;font-size:16px;color:#555;transform:scaleX(0.9506);">Front</span>
<svg class="ic" style="left:2492px;top:280px" width="24" height="23" viewBox="0 0 24 23" ><path d="M11.500 0.700L22.500 5V17L11.500 22.300L1 17V5Z" fill="#d6d6d6" stroke="#333" stroke-width="1.100" stroke-linejoin="round"/><path d="M11.500 0.700L22.500 5L11.500 9.500L1 5Z" fill="#f4f4f4" stroke="#333" stroke-width="1.100" stroke-linejoin="round"/><path d="M11.500 9.500V22.300L1 17V5Z" fill="#9c9c9c" stroke="#333" stroke-width="1.100" stroke-linejoin="round"/></svg>
<svg class="ic" style="left:2525px;top:289px" width="10" height="6" viewBox="0 0 10 6" ><polygon points="0,0 10,0 5,5.200" fill="#222"/></svg>
<div class="abs" style="left:2520px;top:554px;width:41px;height:165px;background:#fff;border:1px solid #a6a6a6"></div>
<div class="abs" style="left:2520px;top:595px;width:40px;height:1px;background:#a6a6a6"></div>
<div class="abs" style="left:2520px;top:636px;width:40px;height:1px;background:#a6a6a6"></div>
<div class="abs" style="left:2520px;top:677px;width:40px;height:1px;background:#a6a6a6"></div>
<div class="abs" style="left:2520px;top:731.500px;width:41px;height:84px;background:#fff;border:1px solid #a6a6a6"></div>
<div class="abs" style="left:2520px;top:773.500px;width:40px;height:1px;background:#a6a6a6"></div>
<svg class="ic" style="left:2528px;top:563px" width="26" height="26" viewBox="0 0 26 26" ><path d="M5 17L11.500 3.500L16.500 6L13 17z" fill="#6d6d6d"/><path d="M11 17L17.500 5.500L22 8.500L17.500 17z" fill="#9a9a9a"/><path d="M16 17L20.500 10L23.500 12.500L21.500 17z" fill="#bdbdbd"/><rect x="1" y="17.500" width="23.500" height="6.800" rx="1.500" fill="#fff" stroke="#555" stroke-width="1.100"/><rect x="18.500" y="18" width="5.500" height="5.800" fill="#cfcfcf"/><path d="M9.500 17.500v6.800M18.500 17.500v6.800" stroke="#555" stroke-width="0.800"/><circle cx="5" cy="21" r="1.300" fill="#555"/></svg>
<svg class="ic" style="left:2528px;top:603px" width="26" height="27" viewBox="0 0 26 27" ><path d="M14.500 6.500L24.500 10.500V20.500L14.500 25.500L5.500 20.500V10.500Z" fill="#fff" stroke="#333" stroke-width="1.400" stroke-linejoin="round"/><path d="M5.500 10.500L14.500 15L24.500 10.500M14.500 15V25.500" fill="none" stroke="#333" stroke-width="1.400"/><rect x="0.300" y="0.800" width="12.400" height="11.200" fill="#fff"/><rect x="0.6" y="1.2" width="3.6" height="3.2" fill="#1f5fc4"/><rect x="0.6" y="4.9" width="3.6" height="3.2" fill="#1f5fc4"/><rect x="0.6" y="8.6" width="3.6" height="3.2" fill="#1f5fc4"/><rect x="4.7" y="1.2" width="3.6" height="3.2" fill="#1f5fc4"/><rect x="4.7" y="4.9" width="3.6" height="3.2" fill="#1f5fc4"/><rect x="4.7" y="8.6" width="3.6" height="3.2" fill="#1f5fc4"/><rect x="8.8" y="1.2" width="3.6" height="3.2" fill="#1f5fc4"/><rect x="8.8" y="4.9" width="3.6" height="3.2" fill="#1f5fc4"/><rect x="8.8" y="8.6" width="3.6" height="3.2" fill="#1f5fc4"/></svg>
<svg class="ic" style="left:2528px;top:644px" width="26" height="26" viewBox="0 0 26 26" ><path d="M14.500 8.500L21.500 11.500V18L14.500 21.500L8 18V11.500Z" fill="#fff" stroke="#333" stroke-width="1.300" stroke-linejoin="round"/><path d="M8 11.500L14.500 14.500L21.500 11.500M14.500 14.500V21.500" fill="none" stroke="#333" stroke-width="1.300"/><path d="M6 9c-2 0-2 1-2 3v2c0 1.500-.800 2-1.800 2.300c1 .3 1.800.8 1.800 2.300v2c0 2 0 3 2 3" fill="none" stroke="#333" stroke-width="1.300"/><path d="M21.500 2.500c2 0 2 1.500 2 3.500v6c0 1.500.6 2.400 1.600 2.700c-1 .3-1.600 1.200-1.600 2.700v4c0 2 0 3-2 3" fill="none" stroke="#333" stroke-width="1.300"/><rect x="0.300" y="0.300" width="12.400" height="10.800" fill="#fff"/><rect x="0.6" y="0.6" width="3.6" height="3.2" fill="#3a3a3a"/><rect x="0.6" y="4.3" width="3.6" height="3.2" fill="#3a3a3a"/><rect x="0.6" y="8.0" width="3.6" height="3.2" fill="#3a3a3a"/><rect x="4.7" y="0.6" width="3.6" height="3.2" fill="#3a3a3a"/><rect x="4.7" y="4.3" width="3.6" height="3.2" fill="#3a3a3a"/><rect x="4.7" y="8.0" width="3.6" height="3.2" fill="#3a3a3a"/><rect x="8.8" y="0.6" width="3.6" height="3.2" fill="#3a3a3a"/><rect x="8.8" y="4.3" width="3.6" height="3.2" fill="#3a3a3a"/><rect x="8.8" y="8.0" width="3.6" height="3.2" fill="#3a3a3a"/></svg>
<svg class="ic" style="left:2528px;top:686px" width="26" height="26" viewBox="0 0 26 26" ><path d="M5 8.500C1.500 12 1.500 20 5 24" fill="none" stroke="#222" stroke-width="2"/><path d="M20.500 4C25 9 25 19 20.500 24" fill="none" stroke="#222" stroke-width="2"/><path d="M8 13c2.500-2 4 -1 5 2.500s2 6 5.500 4" fill="none" stroke="#222" stroke-width="2.600"/><path d="M18 11.500c-2.500-1-4 1-5.500 4s-3 5-5.500 4" fill="none" stroke="#222" stroke-width="2.600"/><rect x="0.300" y="0.300" width="12.400" height="10.800" fill="#fff"/><rect x="0.6" y="0.6" width="3.6" height="3.2" fill="#3a3a3a"/><rect x="0.6" y="4.3" width="3.6" height="3.2" fill="#3a3a3a"/><rect x="0.6" y="8.0" width="3.6" height="3.2" fill="#3a3a3a"/><rect x="4.7" y="0.6" width="3.6" height="3.2" fill="#3a3a3a"/><rect x="4.7" y="4.3" width="3.6" height="3.2" fill="#3a3a3a"/><rect x="4.7" y="8.0" width="3.6" height="3.2" fill="#3a3a3a"/><rect x="8.8" y="0.6" width="3.6" height="3.2" fill="#3a3a3a"/><rect x="8.8" y="4.3" width="3.6" height="3.2" fill="#3a3a3a"/><rect x="8.8" y="8.0" width="3.6" height="3.2" fill="#3a3a3a"/></svg>
<div class="abs" style="left:2526px;top:738px;width:30px;height:29.500px;background:#d5d5d5;border-radius:5px"></div>
<svg class="ic" style="left:2526px;top:738px" width="30" height="30" viewBox="0 0 30 30" ><g transform="translate(15,14.800)"><path d="M-1.200 -1.200L-9.500 -9.500A13.400 13.400 0 0 1 9.500 -9.500L1.200 -1.200Z" fill="#6cc24a" transform="translate(0,-0.800)"/><path d="M1.200 -1.200L9.500 -9.500A13.400 13.400 0 0 1 9.500 9.500L1.200 1.200Z" fill="#4db2ea" transform="translate(0.800,0)"/><path d="M1.200 1.200L9.500 9.500A13.400 13.400 0 0 1 -9.500 9.500L-1.200 1.200Z" fill="#f2b234" transform="translate(0,0.800)"/><path d="M-1.200 1.200L-9.500 9.500A13.400 13.400 0 0 1 -9.500 -9.500L-1.200 -1.200Z" fill="#d8403a" transform="translate(-0.800,0)"/></g></svg>
<div class="abs" style="left:2526.500px;top:780.500px;width:28px;height:28px;background:#cfcfcf;border-radius:4px"></div>
<div class="abs" style="left:2528.500px;top:783px;width:24px;height:23px;background:#0b58c6;border:1.500px solid #16213a"></div>
<span class="t" style="left:2530.200px;top:782.500px;font-family:'Liberation Serif',serif;font-weight:bold;font-size:24px;color:#fff;transform:scaleX(0.480);">MK</span>
<svg class="ic" style="left:2437px;top:1268px" width="22" height="17" viewBox="0 0 22 17" ><ellipse cx="13.800" cy="5" rx="6.800" ry="3.900" fill="#fff" stroke="#2d2d2d" stroke-width="1.500"/><ellipse cx="14" cy="5.200" rx="2.900" ry="1.400" fill="#2d2d2d"/><path d="M7 5v5M20.600 5v7c0 2-2 3.300-4.500 3.300H1V10h13c3.500 0 6.600-1.500 6.600-4" fill="none" stroke="#2d2d2d" stroke-width="1.500"/><path d="M3.500 12.500v2.800M6 13.500v1.800M8.500 12.500v2.800M11 13.500v1.800M13.500 12.500v2.800M16 13.500v1.800" stroke="#2d2d2d" stroke-width="1"/></svg>
<svg class="ic" style="left:2479px;top:1268px" width="26" height="18" viewBox="0 0 26 18" ><path d="M1 16.200C1 8 6 1.500 13 1.500S25 8 25 16.200Z" fill="#fff" stroke="#2d2d2d" stroke-width="1.700" stroke-linejoin="round"/><path d="M5.800 13C6.500 9 9.300 6.300 13 6.300S19.500 9 20.200 13H15.500C15.200 11.700 14.200 11 13 11S10.800 11.700 10.500 13Z" fill="#fff" stroke="#2d2d2d" stroke-width="1.500" stroke-linejoin="round"/></svg>
<svg class="ic" style="left:2526px;top:1267px" width="19" height="19" viewBox="0 0 19 19" ><path d="M3 1.500H16" stroke="#2d2d2d" stroke-width="1.700"/><path d="M9.500 1.500V14" stroke="#2d2d2d" stroke-width="2"/><path d="M0.800 17H18.200" stroke="#2d2d2d" stroke-width="2.400"/><path d="M3.500 2L1.200 11.500M3.500 2L5.800 11.500M15.500 2L13.200 11.500M15.500 2L17.800 11.500" stroke="#2d2d2d" stroke-width="1.100"/><path d="M0.500 11.500H6.500V13H0.500ZM12.500 11.500H18.500V13H12.500Z" fill="#2d2d2d"/></svg>
<svg class="abs" style="left:0;top:1290px" width="900" height="42" viewBox="0 1290 900 42">
<path d="M92.800 1295.300H135.700L145.400 1312L135.700 1328.800H95.800Q92.800 1328.800 92.800 1325.800Z" fill="#e8e8e8"/>
<path d="M136.300 1295.300H281.700L291.300 1312L281.700 1328.800H136.300L145.800 1312Z" fill="#fff"/>
<path d="M294 1295.500H544.500V1323Q544.500 1329 538.500 1329H300Q294 1329 294 1323Z" fill="#e9e9e9"/>
<path d="M546 1295H796.300V1323.500Q796.300 1329.500 790.300 1329.500H552Q546 1329.500 546 1323.500Z" fill="#fff"/>
<path d="M546 1323.500Q546 1329.500 552 1329.500H790.300Q796.300 1329.500 796.300 1323.500V1322.500Q796.300 1326.500 791.500 1326.500H550.800Q546 1326.500 546 1322.500Z" fill="#1550b0"/>
</svg>
<svg class="ic" style="left:61px;top:1303.5px" width="19" height="19" viewBox="0 0 19 19" ><path d="M9.500 0V19M0 9.500H19" stroke="#666" stroke-width="3.600"/></svg>
<svg class="ic" style="left:104px;top:1298px" width="24" height="23" viewBox="0 0 24 23" ><path d="M0 11.500L11.500 0.500L16.800 5.500V1.500H20.200V8.800L22.800 11.500V22.800H14.500V15.500H8.800V22.800H0Z" fill="#6b6b6b"/></svg>
<svg class="ic" style="left:157.5px;top:1300.5px" width="23" height="18" viewBox="0 0 23 18" ><path d="M0.800 1h7l1.800 2.300H22v14H0.800z" fill="none" stroke="#3a3a3a" stroke-width="1.400" stroke-linejoin="round"/></svg>
<span class="t" style="left:188.3px;top:1302px;font-size:17.5px;color:#7a7a7a;transform:scaleX(0.9486);">Exercise 1</span>
<svg class="ic" style="left:306px;top:1299.5px" width="24" height="24" viewBox="0 0 24 24" ><path d="M1 4L5 0.800H19L23 5.500V22.500H5.500L1 18Z" fill="#fff" stroke="#333" stroke-width="1.300" stroke-linejoin="round"/><path d="M1 4L5.500 8.500H23M5.500 8.500V22.500" fill="none" stroke="#333" stroke-width="1.200"/><path d="M1 4L5 0.800H15V12.500L12 15.500H5.500L1 12Z" fill="#9a9a9a" stroke="#333" stroke-width="1.200" stroke-linejoin="round"/><path d="M1 4L5.500 7H15M5.500 7V15.500" fill="none" stroke="#333" stroke-width="1.100"/></svg>
<span class="t" style="left:335.6px;top:1305px;font-size:17.5px;color:#7a7a7a;transform:scaleX(0.9805);">Exercise 1 Assembly</span>
<svg class="ic" style="left:561px;top:1299.5px" width="23" height="24" viewBox="0 0 23 24" ><g fill="#fff" stroke="#333" stroke-width="1.300" stroke-linejoin="round"><path d="M1 9.500L4 7.500H9.500V20.500L6.500 23H4L1 20.500Z"/><path d="M1 9.500L4 11.500V23M4 11.500H9" fill="none"/><path d="M11.500 3L14.500 0.800H19L22 3.200V20.500L19.500 23H14.500L11.500 20.500Z"/><path d="M11.500 3L14.500 5V23M14.500 5H19.500L22 3.200M19.500 5V23" fill="none"/></g></svg>
<span class="t" style="left:588.4px;top:1305px;font-size:17.5px;color:#555;transform:scaleX(0.9663);">Exercise 1 Part Studio</span>
</body></html>
